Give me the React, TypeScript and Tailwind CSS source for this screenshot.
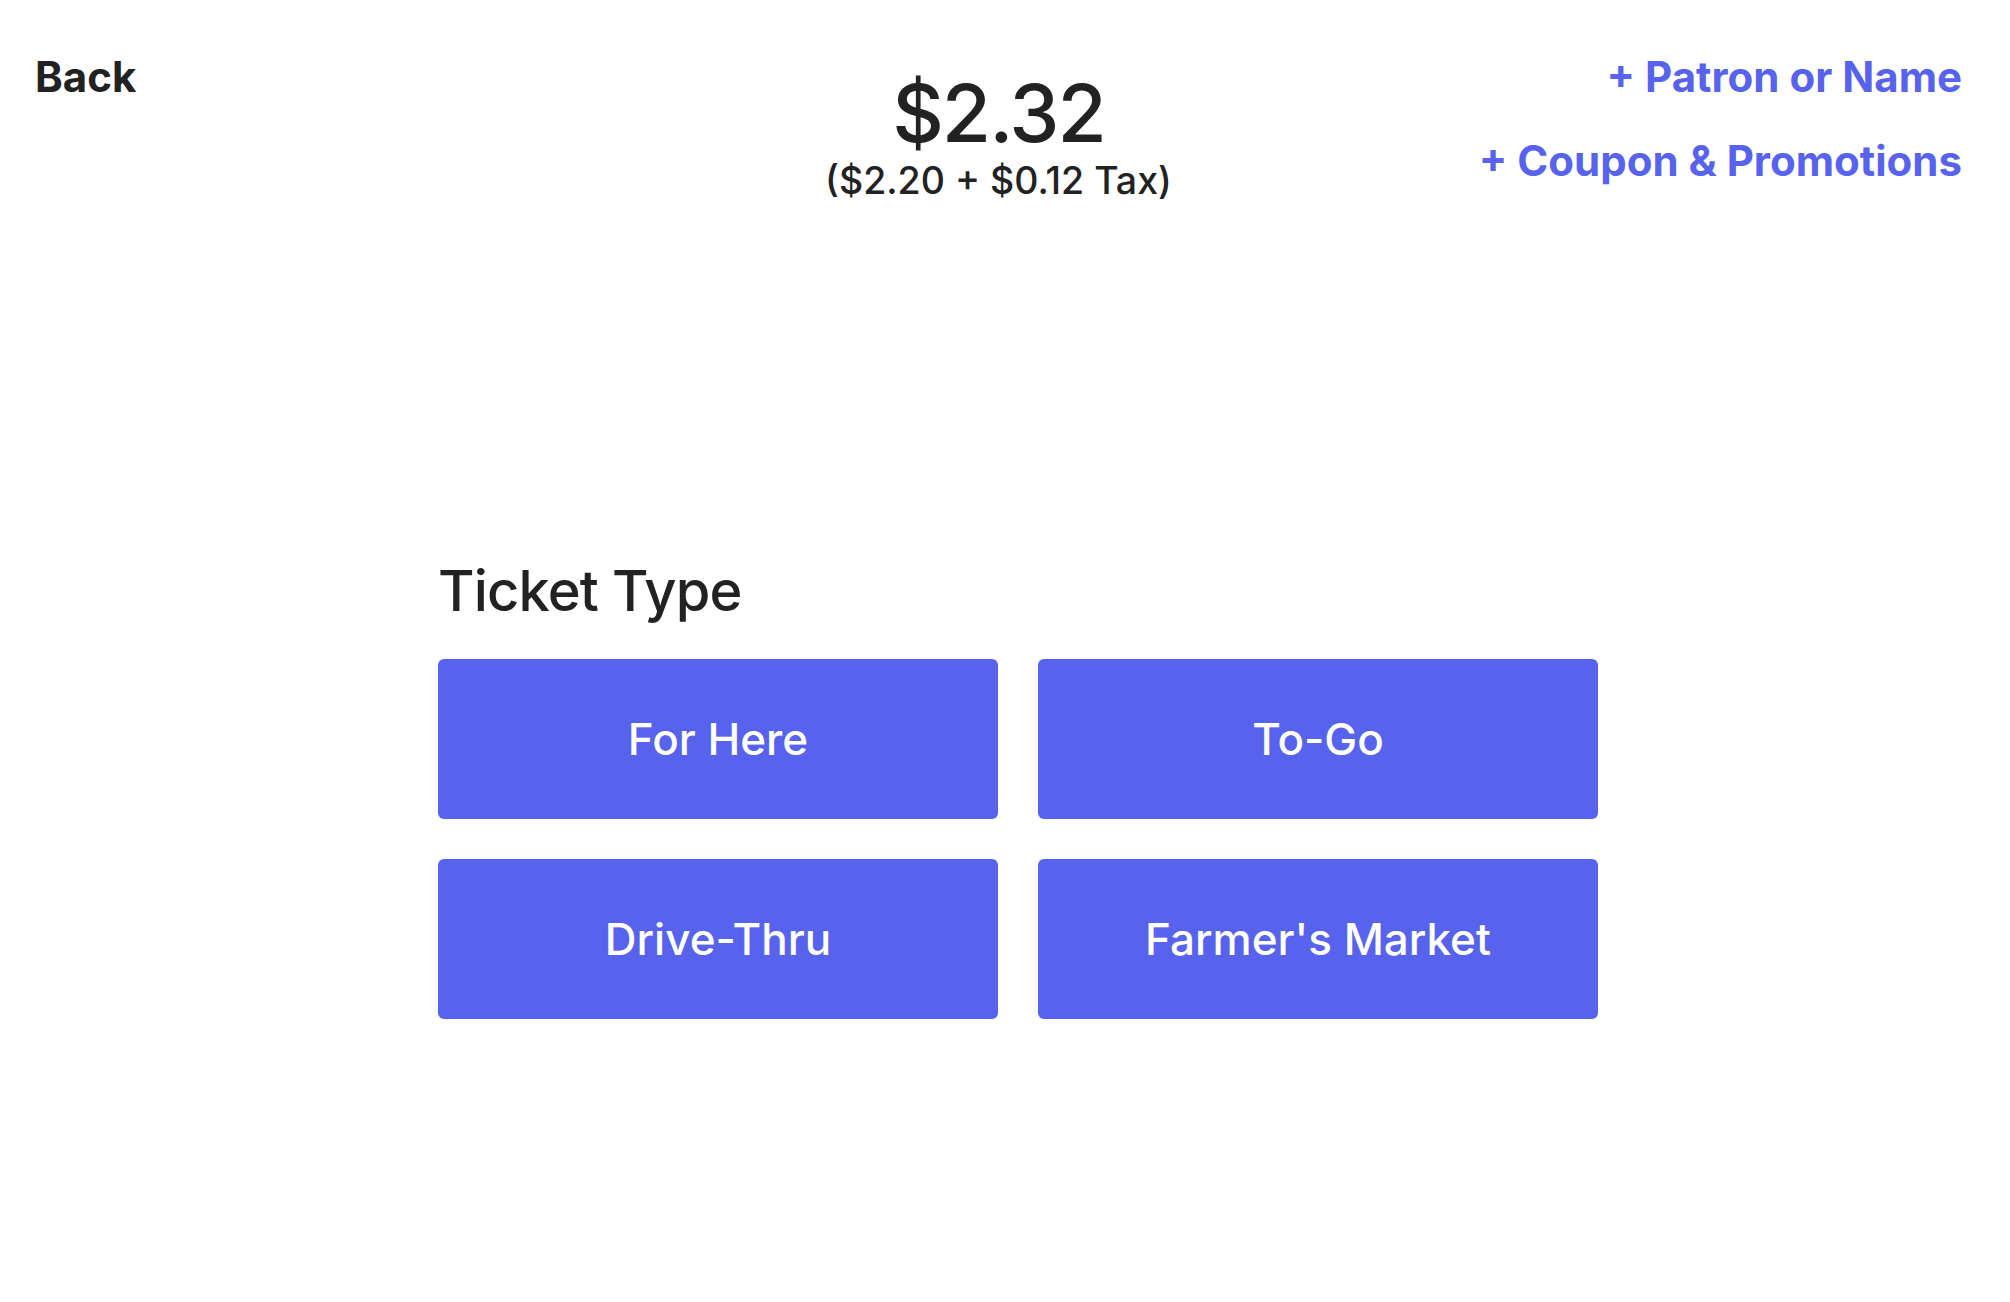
import React from 'react';

const ticketTypes = ['For Here', 'To-Go', 'Drive-Thru', "Farmer's Market"];

const App: React.FC = () => {
  return (
    <div
      className="min-h-screen bg-white text-[#222222]"
      style={{ fontFamily: 'Inter, "Noto Sans", sans-serif' }}
    >
      {/* header */}
      <div className="grid grid-cols-3 items-start pl-[35px] pr-[48px] pt-[53px]">
        <div>
          <button className="text-[42px] leading-[48px] font-bold">Back</button>
        </div>
        <div className="flex flex-col items-center pt-[20px]">
          <div className="text-[80px] leading-[80px] font-medium tracking-tight">$2.32</div>
          <div className="mt-[8px] text-[37.5px] leading-[40px] font-medium">($2.20 + $0.12 Tax)</div>
        </div>
        <div className="flex flex-col items-end gap-[36px] text-[#5763ed]">
          <button className="text-[42px] leading-[48px] font-bold">+ Patron or Name</button>
          <button className="text-[42px] leading-[48px] font-bold">+ Coupon &amp; Promotions</button>
        </div>
      </div>

      {/* ticket type */}
      <div className="pl-[438px] pt-[358px]">
        <h2 className="text-[56px] leading-[64px] font-medium tracking-[-0.015em] mb-[36px]">Ticket Type</h2>
        <div className="grid grid-cols-2 gap-10 w-[1160px]">
          {ticketTypes.map(type => (
            <button
              key={type}
              className="h-[160px] rounded-md bg-[#5763ed] text-white text-[44px] font-medium flex items-center justify-center"
            >
              {type}
            </button>
          ))}
        </div>
      </div>
    </div>
  );
};

export default App;
